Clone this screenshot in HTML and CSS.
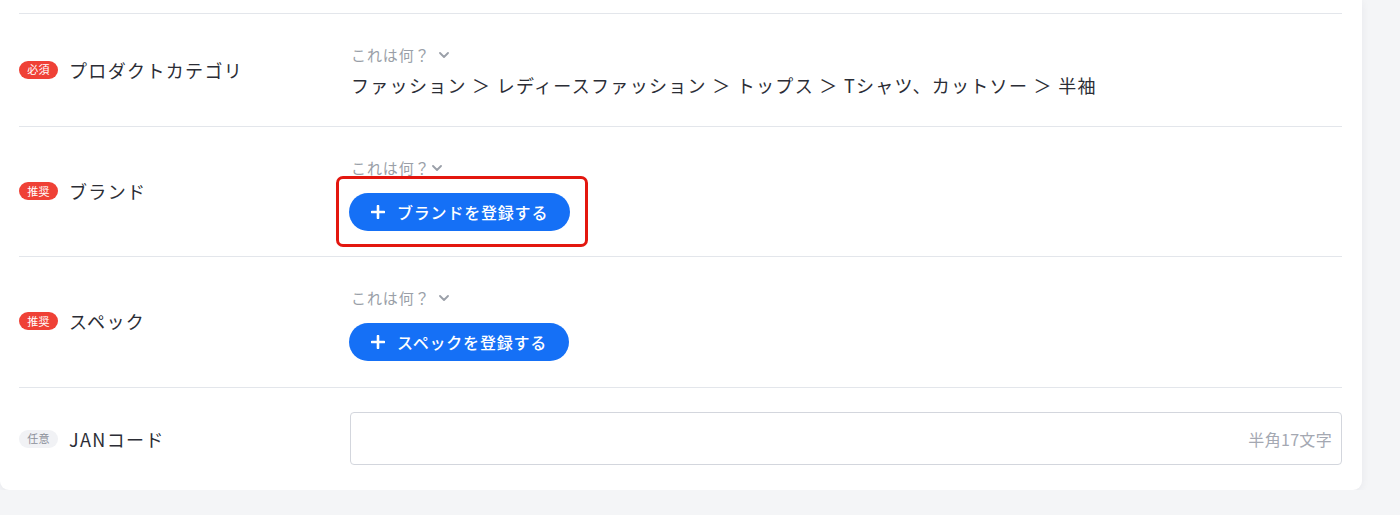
FILE: index.html
```html
<!DOCTYPE html>
<html lang="ja">
<head>
<meta charset="utf-8">
<title>商品情報</title>
<link rel="stylesheet" href="styles.css">
</head>
<body>
<div class="card">
  <div class="row-prev"></div>

  <div class="row">
    <div class="label"><span class="badge badge-red">必須</span><span class="label-text">プロダクトカテゴリ</span></div>
    <div class="content">
      <div class="help">これは何？<svg class="chev" viewBox="0 0 10 6" width="10" height="6"><path d="M1 1l4 4 4-4" fill="none" stroke="currentColor" stroke-width="1.8" stroke-linecap="round" stroke-linejoin="round"/></svg></div>
      <div class="category">ファッション ＞ レディースファッション ＞ トップス ＞ Tシャツ、カットソー ＞ 半袖</div>
    </div>
  </div>

  <div class="row">
    <div class="label"><span class="badge badge-red">推奨</span><span class="label-text">ブランド</span></div>
    <div class="content">
      <div class="help help-tight">これは何？<svg class="chev" viewBox="0 0 10 6" width="10" height="6"><path d="M1 1l4 4 4-4" fill="none" stroke="currentColor" stroke-width="1.8" stroke-linecap="round" stroke-linejoin="round"/></svg></div>
      <div class="btn-wrap">
        <button class="btn"><svg class="plus" viewBox="0 0 14 14" width="14" height="14"><path d="M7 1v12M1 7h12" stroke="currentColor" stroke-width="2.6" stroke-linecap="round"/></svg>ブランドを登録する</button>
        <span class="highlight"></span>
      </div>
    </div>
  </div>

  <div class="row row-spec">
    <div class="label"><span class="badge badge-red">推奨</span><span class="label-text">スペック</span></div>
    <div class="content">
      <div class="help">これは何？<svg class="chev" viewBox="0 0 10 6" width="10" height="6"><path d="M1 1l4 4 4-4" fill="none" stroke="currentColor" stroke-width="1.8" stroke-linecap="round" stroke-linejoin="round"/></svg></div>
      <div class="btn-wrap">
        <button class="btn"><svg class="plus" viewBox="0 0 14 14" width="14" height="14"><path d="M7 1v12M1 7h12" stroke="currentColor" stroke-width="2.6" stroke-linecap="round"/></svg>スペックを登録する</button>
      </div>
    </div>
  </div>

  <div class="row row-last">
    <div class="label"><span class="badge badge-gray">任意</span><span class="label-text">JANコード</span></div>
    <div class="content">
      <div class="input"><span class="counter">半角17文字</span></div>
    </div>
  </div>
</div>
</body>
</html>
```

FILE: styles.css
```css
* { box-sizing: border-box; }

html, body {
  margin: 0;
  padding: 0;
  background: #f4f5f7;
  font-family: "Noto Sans CJK JP", "Noto Sans", sans-serif;
  color: #2e3038;
}

.card {
  width: 1362px;
  height: 490px;
  background: #ffffff;
  border-radius: 0 0 9px 9px;
  box-shadow: 0 2px 8px rgba(30, 40, 60, 0.06);
  padding: 0 20px 0 19px;
}

.row-prev {
  height: 14px;
  border-bottom: 1px solid #e3e6eb;
}

.row {
  display: flex;
  align-items: center;
  padding: 24px 0 25px;
  border-bottom: 1px solid #e3e6eb;
}

.row-spec {
  padding-bottom: 26px;
}

.row-last {
  border-bottom: none;
  padding: 24px 0 25px;
}

.label {
  width: 331px;
  flex: none;
  display: flex;
  align-items: center;
  gap: 11px;
}

.badge {
  display: inline-flex;
  align-items: center;
  justify-content: center;
  width: 39px;
  height: 18px;
  border-radius: 9px;
  font-size: 11px;
  line-height: 1;
  letter-spacing: 0.02em;
}

.badge-red {
  background: #ef4136;
  color: #ffffff;
}

.badge-gray {
  background: #f1f2f5;
  color: #8c909a;
}

.label-text {
  font-size: 18px;
  letter-spacing: 0.075em;
  color: #2b2d35;
}

.content {
  flex: 1;
  display: flex;
  flex-direction: column;
}

.help {
  height: 32px;
  display: flex;
  align-items: center;
  gap: 8px;
  font-size: 15px;
  letter-spacing: 0.06em;
  color: #9a9fa8;
  padding-left: 1px;
}

.help-tight { gap: 1px; }

.chev {
  color: #9a9fa8;
  margin-top: 1px;
}

.category {
  font-size: 18px;
  line-height: 31px;
  letter-spacing: 0.072em;
  color: #2b2d35;
  padding-left: 1px;
}

.btn-wrap {
  position: relative;
  align-self: flex-start;
  margin-top: 10px;
  margin-left: -1px;
}

.btn {
  display: inline-flex;
  align-items: center;
  gap: 12px;
  height: 38px;
  padding: 0 22px 0 22px;
  border: none;
  border-radius: 19px;
  background: #1570f6;
  color: #ffffff;
  font-family: "Noto Sans CJK JP", "Noto Sans", sans-serif;
  font-size: 16px;
  font-weight: 500;
  letter-spacing: 0.05em;
}

.plus { flex: none; }

.highlight {
  position: absolute;
  left: -13px;
  top: -17px;
  right: -18px;
  bottom: -16px;
  border: 3px solid #e3170f;
  border-radius: 7px;
  pointer-events: none;
}

.input {
  height: 53px;
  border: 1px solid #d3d6dd;
  border-radius: 4px;
  display: flex;
  align-items: center;
  justify-content: flex-end;
  padding-right: 9px;
}

.counter {
  font-size: 16px;
  color: #a4a8b2;
  letter-spacing: 0.02em;
}
```
